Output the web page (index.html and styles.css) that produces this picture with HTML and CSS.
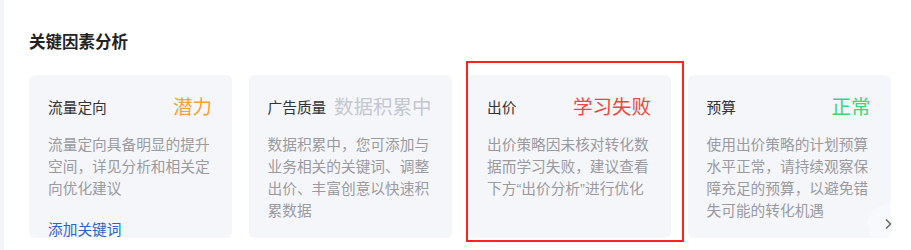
FILE: index.html
```html
<!DOCTYPE html>
<html lang="zh-CN">
<head>
    <meta charset="UTF-8">
    <meta name="viewport" content="width=device-width, initial-scale=1.0">
    <title>关键因素分析</title>
    <link rel="stylesheet" href="styles.css">
</head>
<body>

    <!-- Panel -->
    <section class="panel">
        <h2 class="panel-title">关键因素分析</h2>

        <div class="factor-row">
            <div class="factor-card">
                <div class="factor-head">
                    <span class="factor-name">流量定向</span>
                    <span class="factor-status status-potential">潜力</span>
                </div>
                <p class="factor-desc">流量定向具备明显的提升空间，详见分析和相关定向优化建议</p>
                <a class="factor-link" href="#">添加关键词</a>
            </div>

            <div class="factor-card">
                <div class="factor-head">
                    <span class="factor-name">广告质量</span>
                    <span class="factor-status status-pending">数据积累中</span>
                </div>
                <p class="factor-desc">数据积累中，您可添加与业务相关的关键词、调整出价、丰富创意以快速积累数据</p>
            </div>

            <div class="factor-card">
                <div class="factor-head">
                    <span class="factor-name">出价</span>
                    <span class="factor-status status-failed">学习失败</span>
                </div>
                <p class="factor-desc">出价策略因未核对转化数据而学习失败，建议查看下方<span class="q">“</span>出价分析<span class="q">”</span>进行优化</p>
                <!-- highlight frame -->
                <div class="highlight"></div>
            </div>

            <div class="factor-card">
                <div class="factor-head">
                    <span class="factor-name">预算</span>
                    <span class="factor-status status-normal">正常</span>
                </div>
                <p class="factor-desc">使用出价策略的计划预算水平正常，请持续观察保障充足的预算，以避免错失可能的转化机遇</p>
            </div>

            <button class="next-btn" aria-label="下一页">
                <svg width="9" height="12" viewBox="0 0 9 12">
                    <path d="M2 1.5 L6.5 6 L2 10.5" fill="none" stroke="#666" stroke-width="1.5"/>
                </svg>
            </button>
        </div>
    </section>

</body>
</html>
```

FILE: styles.css
```css
/* Basic Reset */
* {
    margin: 0;
    padding: 0;
    box-sizing: border-box;
    font-family: "Noto Sans CJK SC", "Noto Sans", sans-serif;
}

body {
    background-color: #f3f5fa;
    color: #333;
    height: 250px;
    overflow: hidden;
}

/* Panel */
.panel {
    margin-left: 4px;
    height: 250px;
    background-color: #fff;
    padding: 29px 0 0 25px;
}

.panel-title {
    font-size: 16.5px;
    font-weight: bold;
    line-height: 24px;
    color: #222;
    margin-bottom: 22px;
}

/* Cards */
.factor-row {
    position: relative;
    display: flex;
    gap: 16.5px;
}

.factor-card {
    position: relative;
    flex: 0 0 203px;
    height: 163px;
    background-color: #f5f6fa;
    border-radius: 6px;
    padding: 17px 20px 0 19px;
}

.factor-head {
    display: flex;
    justify-content: space-between;
    align-items: center;
    height: 28px;
}

.factor-name {
    font-size: 14.7px;
    color: #333;
}

.factor-status {
    font-size: 19.5px;
    line-height: 28px;
}

.status-potential {
    color: #f6a134;
}

.status-pending {
    color: #c3c7cf;
}

.status-failed {
    color: #ef4636;
}

.status-normal {
    color: #3dd47a;
}

.factor-desc {
    margin-top: 13px;
    font-size: 14.7px;
    line-height: 22px;
    color: #9a9a9f;
}

/* narrow western quotes, as in the source */
.factor-desc .q {
    font-family: "Liberation Sans", sans-serif;
    line-height: 1;
}

.factor-link {
    display: block;
    margin-top: 21px;
    font-size: 14.7px;
    line-height: 18px;
    color: #2d63c8;
    text-decoration: none;
}

/* Red highlight frame over the bid card */
.highlight {
    position: absolute;
    left: -2px;
    top: -14px;
    right: -13px;
    bottom: -4px;
    border: 2px solid #f22;
    pointer-events: none;
}

/* Carousel arrow */
.next-btn {
    position: absolute;
    left: 839px;
    top: 129px;
    width: 40px;
    height: 40px;
    border: none;
    border-radius: 50%;
    background-color: rgba(255, 255, 255, 0.35);
    display: flex;
    align-items: center;
    justify-content: center;
    cursor: pointer;
}
```
